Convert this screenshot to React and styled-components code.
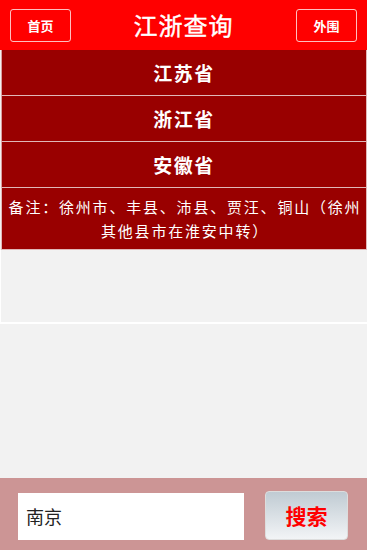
import styled, { createGlobalStyle } from 'styled-components';

const GlobalStyle = createGlobalStyle`
  html, body {
    margin: 0;
    padding: 0;
    background: #f2f2f2;
    font-family: "Noto Sans CJK SC", "Liberation Sans", sans-serif;
  }
`;

const provinces = ['江苏省', '浙江省', '安徽省'];

function App() {
  return (
    <Page>
      <GlobalStyle />
      <Header>
        <HeadButton>首页</HeadButton>
        <Title>江浙查询</Title>
        <HeadButton>外围</HeadButton>
      </Header>

      <List>
        {provinces.map((p) => (
          <Row key={p}>{p}</Row>
        ))}
        <Note>备注：徐州市、丰县、沛县、贾汪、铜山（徐州其他县市在淮安中转）</Note>
      </List>

      <EmptyBox />

      <SearchBar>
        <SearchInput defaultValue="南京" />
        <SearchButton>搜索</SearchButton>
      </SearchBar>
    </Page>
  );
}

const Page = styled.div`
  width: 367px;
  height: 550px;
  display: flex;
  flex-direction: column;
  background: #f2f2f2;
  overflow: hidden;
`;

const Header = styled.div`
  height: 50px;
  background: #ff0000;
  display: flex;
  align-items: center;
  justify-content: space-between;
  padding: 0 10px;
  box-sizing: border-box;
  flex-shrink: 0;
`;

const HeadButton = styled.div`
  width: 61px;
  height: 33px;
  box-sizing: border-box;
  border: 1px solid rgba(255, 255, 255, 0.75);
  border-radius: 3px;
  color: #fff;
  font-size: 13px;
  font-weight: bold;
  display: flex;
  align-items: center;
  justify-content: center;
`;

const Title = styled.h1`
  margin: 0 0 2px 0;
  color: #fff;
  font-size: 24px;
  font-weight: normal;
  letter-spacing: 1px;
  -webkit-text-stroke: 0.4px #fff;
`;

const List = styled.div`
  margin: 0 0 0 1px;
  display: flex;
  flex-direction: column;
  flex-shrink: 0;
`;

const Row = styled.div`
  height: 46px;
  box-sizing: border-box;
  background: #990000;
  border: 1px solid #e0b8b8;
  border-top: none;
  border-left-color: #d9a0a0;
  color: #fff;
  font-size: 19px;
  font-weight: bold;
  letter-spacing: 1.5px;
  display: flex;
  align-items: center;
  justify-content: center;
`;

const Note = styled.div`
  height: 62px;
  box-sizing: border-box;
  background: #990000;
  border: 1px solid #e0b8b8;
  border-top: none;
  color: #fff;
  font-size: 15px;
  line-height: 24px;
  text-align: center;
  padding: 7px 2px 0 4px;
  letter-spacing: 1.8px;
`;

const EmptyBox = styled.div`
  height: 74px;
  box-sizing: border-box;
  background: #f2f2f2;
  border-left: 1px solid #fff;
  border-bottom: 2px solid #fff;
  flex-shrink: 0;
`;

const SearchBar = styled.div`
  margin-top: auto;
  height: 72px;
  background: #cc9595;
  display: flex;
  align-items: center;
  padding: 0 19px 0 18px;
  gap: 21px;
  box-sizing: border-box;
  flex-shrink: 0;
`;

const SearchInput = styled.input`
  width: 226px;
  height: 47px;
  box-sizing: border-box;
  border: none;
  outline: none;
  background: #fff;
  padding: 0 8px;
  margin-top: 4px;
  font-family: "Noto Sans CJK SC", "Liberation Sans", sans-serif;
  font-size: 18px;
  color: #222;
`;

const SearchButton = styled.button`
  width: 83px;
  height: 49px;
  box-sizing: border-box;
  border: 1px solid #ddd;
  border-radius: 4px;
  background: linear-gradient(to bottom, #c0cbd3, #f2f4f6);
  color: #ff0000;
  font-family: "Noto Sans CJK SC", "Liberation Sans", sans-serif;
  font-size: 21px;
  font-weight: bold;
  margin-top: 2px;
`;

export default App;
